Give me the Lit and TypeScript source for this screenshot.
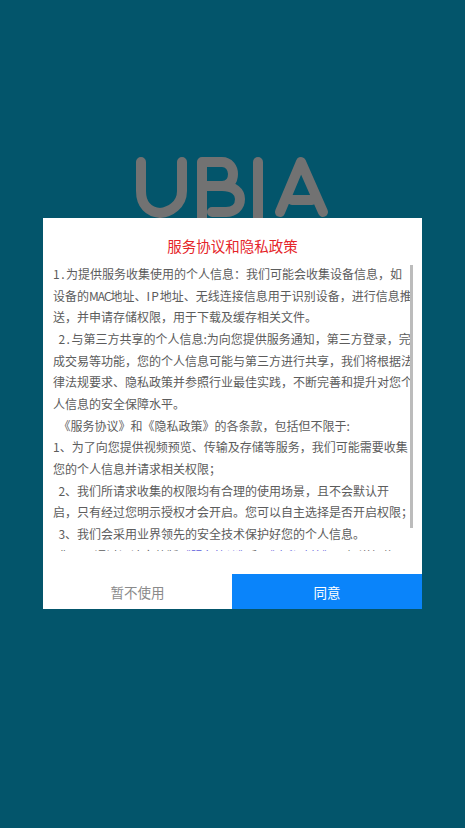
import { LitElement, html, css } from "lit";
import { customElement } from "lit/decorators.js";

const C = "\uff0c";
const K = "\uff1a";
const S = "\uff1b";
const N = "\u00a0\u00a0";

@customElement("app-root")
export class AppRoot extends LitElement {
  static styles = css`
    :host {
      display: block;
      width: 465px;
      height: 828px;
      background: #03556b;
      font-family: "Noto Sans CJK SC", "Noto Sans", sans-serif;
      overflow: hidden;
      position: relative;
    }
    .logo {
      position: absolute;
      left: 134px;
      top: 155px;
    }
    .overlay {
      position: absolute;
      inset: 0;
      display: flex;
      flex-direction: column;
      align-items: center;
      padding-top: 218px;
      box-sizing: border-box;
    }
    .dialog {
      width: 379px;
      height: 391px;
      background: #fff;
      display: flex;
      flex-direction: column;
      position: relative;
    }
    .title {
      height: 45px;
      padding-top: 18px;
      box-sizing: border-box;
      text-align: center;
      color: #e5252a;
      font-size: 14.5px;
      line-height: 19px;
    }
    .body {
      height: 288px;
      overflow: hidden;
      padding-left: 10px;
      font-size: 12px;
      line-height: 21.65px;
      color: #5c5c5c;
    }
    .line {
      white-space: nowrap;
    }
    .num {
      letter-spacing: 1.5px;
    }
    .latin {
      letter-spacing: -1px;
    }
    .wide {
      letter-spacing: 1px;
    }
    .link {
      color: #5b5bdc;
    }
    .bar {
      position: absolute;
      left: 367px;
      top: 47px;
      width: 3px;
      height: 263px;
      background: #bcbcbc;
    }
    .spacer {
      flex: 1;
    }
    .actions {
      display: grid;
      grid-template-columns: 189px 1fr;
      height: 35px;
    }
    .btn {
      display: flex;
      align-items: center;
      justify-content: center;
      font-size: 13.5px;
    }
    .cancel {
      color: #8a8a8a;
      background: #fff;
    }
    .ok {
      color: #fff;
      background: #0a84fa;
    }
  `;

  render() {
    const lines = [
      html`<span class="num">1.</span>为提供服务收集使用的个人信息${K}我们可能会收集设备信息${C}如`,
      html`设备的<span class="latin">MAC</span>地址、<span class="wide">IP</span>地址、无线连接信息用于识别设备${C}进行信息推`,
      html`送${C}并申请存储权限${C}用于下载及缓存相关文件。`,
      html`${N}<span class="num">2.</span>与第三方共享的个人信息:为向您提供服务通知${C}第三方登录${C}完`,
      html`成交易等功能${C}您的个人信息可能与第三方进行共享${C}我们将根据法`,
      html`律法规要求、隐私政策并参照行业最佳实践${C}不断完善和提升对您个`,
      html`人信息的安全保障水平。`,
      html`${N}《服务协议》和《隐私政策》的各条款${C}包括但不限于:`,
      html`1、为了向您提供视频预览、传输及存储等服务${C}我们可能需要收集`,
      html`您的个人信息并请求相关权限${S}`,
      html`${N}2、我们所请求收集的权限均有合理的使用场景${C}且不会默认开`,
      html`启${C}只有经过您明示授权才会开启。您可以自主选择是否开启权限${S}`,
      html`${N}3、我们会采用业界领先的安全技术保护好您的个人信息。`,
      html`${N}您可以通过阅读完整版<span class="link">《服务协议》</span>和<span class="link">《隐私政策》</span>了解详细信`,
    ];
    return html`
      <svg class="logo" width="196" height="68" viewBox="0 0 196 68" fill="none" stroke="#727272" stroke-width="10" stroke-linecap="round" stroke-linejoin="round">
        <path d="M7 7V36C7 50 15 57 26 58C36 57 48 50 48 36V7" />
        <path d="M68 66V7H88C95 7 99 13 99 19C99 26 95 31 88 31H68M88 31C100 31 106 37 106 44C106 52 100 57 92 57H78" />
        <path d="M124 7V66" />
        <path d="M146 57L167 7L189 57M158 45H178" />
      </svg>
      <div class="overlay">
        <div class="dialog">
          <div class="title">服务协议和隐私政策</div>
          <div class="body">
            ${lines.map((l) => html`<div class="line">${l}</div>`)}
          </div>
          <div class="bar"></div>
          <div class="spacer"></div>
          <div class="actions">
            <div class="btn cancel">暂不使用</div>
            <div class="btn ok">同意</div>
          </div>
        </div>
      </div>
    `;
  }
}
